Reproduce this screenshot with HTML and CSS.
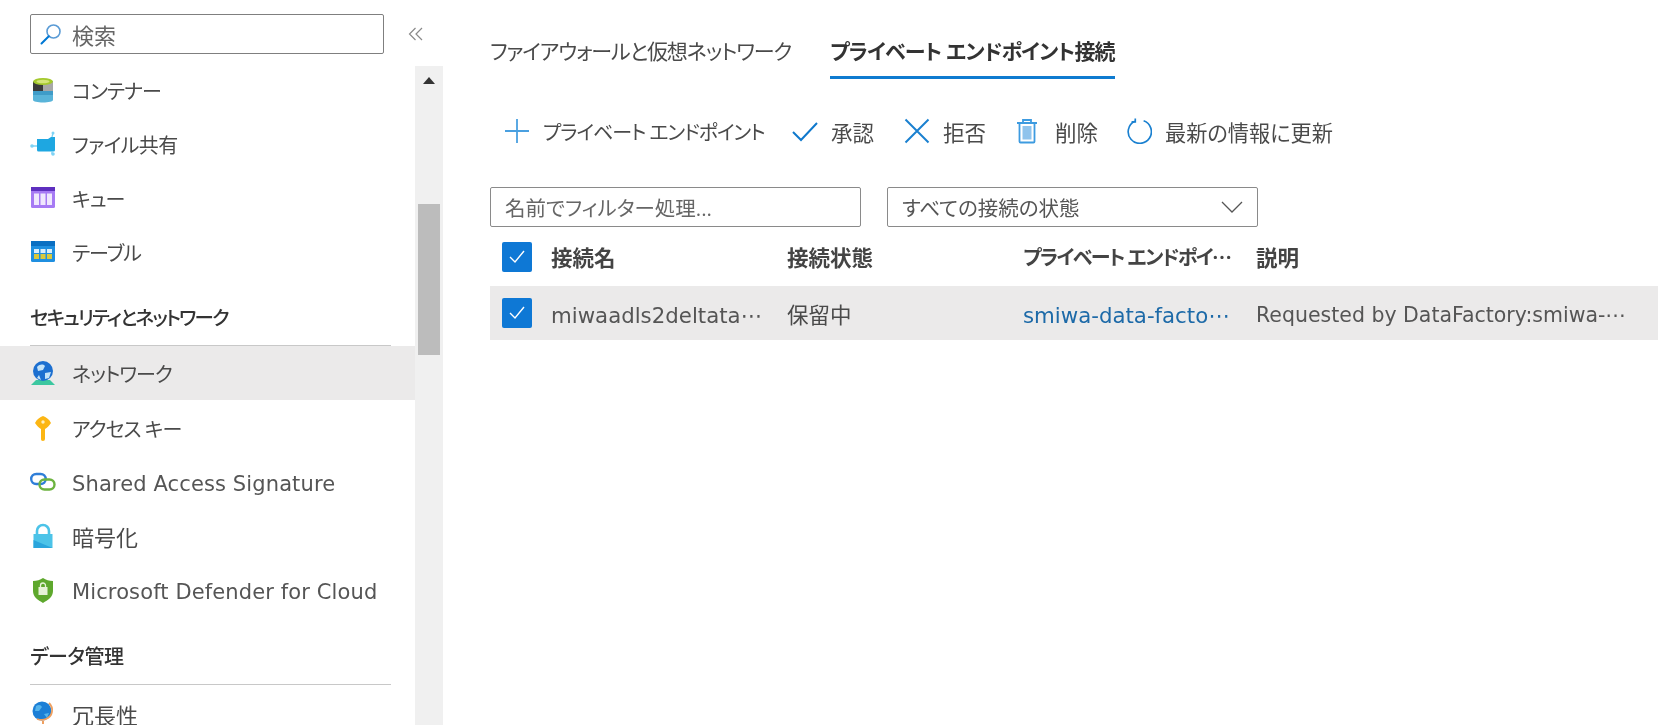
FILE: index.html
```html
<!DOCTYPE html>
<html lang="ja">
<head>
<meta charset="utf-8">
<title>ネットワーク</title>
<link rel="stylesheet" href="styles.css">
</head>
<body>
<div class="app">
  <aside class="side">
    <div class="search-row">
      <div class="search">
        <svg class="search-icon" viewBox="0 0 22 22"><circle cx="13.5" cy="8.5" r="6.5" fill="none" stroke="#5a9bd5" stroke-width="1.6"/><path d="M8.8 13.2 1.5 20.5" stroke="#0078d4" stroke-width="2" stroke-linecap="round"/></svg>
        <span>検索</span>
      </div>
      <svg class="collapse" viewBox="0 0 16 16"><path d="M7.5 2 1.5 8l6 6M14 2 8 8l6 6" fill="none" stroke="#8a8a8a" stroke-width="1.2"/></svg>
    </div>
    <div class="side-body">
      <nav class="nav">
        <a class="item"><svg class="ic" viewBox="0 0 26 26"><path d="M3 4h20v19c0 1.5-4.5 2.5-10 2.5S3 24.500 3 23z" fill="#59b4d9"/><path d="M3 5h10v9H3z" fill="#3a3a3a"/><path d="M13 5h10v9H13z" fill="#a8a8a8"/><path d="M3 14h20v4H3z" fill="#3f9cc8"/><ellipse cx="13" cy="4.500" rx="10" ry="3.500" fill="#a4c92d"/><ellipse cx="13" cy="4.500" rx="6.500" ry="1.800" fill="#d5e57a"/></svg><span>コンテナー</span></a>
        <a class="item"><svg class="ic" viewBox="0 0 26 26"><path d="M7 8h11l3-2h4v13a1.500 1.500 0 0 1-1.500 1.500h-15A1.500 1.500 0 0 1 7 19z" fill="#1ea7e1"/><path d="M1 15h6M22 6l1-4M22 20v3" stroke="#7fd3f5" stroke-width="1.300"/><circle cx="2" cy="15" r="1.800" fill="#7fd3f5"/><circle cx="23" cy="2" r="1.500" fill="#7fd3f5"/><circle cx="23" cy="23" r="1.800" fill="#7fd3f5"/></svg><span class="loose">ファイル共有</span></a>
        <a class="item"><svg class="ic" viewBox="0 0 26 26"><rect x="1" y="2" width="24" height="21" rx="1.500" fill="#a67af4"/><rect x="1" y="2" width="24" height="4" fill="#5e2fbf"/><path d="M4 8.500h5V20H4zM10.500 8.500h5V20h-5zM17 8.500h5V20h-5z" fill="#efe7fd"/></svg><span>キュー</span></a>
        <a class="item"><svg class="ic" viewBox="0 0 26 26"><rect x="1" y="2" width="24" height="21" rx="1.500" fill="#1f8fe0"/><rect x="1" y="2" width="24" height="5" fill="#0a6fc2"/><path d="M4 10h5v4H4zM10.500 10h5v4h-5zM17 10h5v4h-5z" fill="#d9eefb"/><path d="M4 15h5v5H4zM10.500 15h5v5h-5zM17 15h5v5h-5z" fill="#d8c93c"/></svg><span>テーブル</span></a>
        <div class="section">セキュリティとネットワーク</div>
        <a class="item active"><svg class="ic" viewBox="0 0 26 26"><path d="M6 20 1 25h24l-5-5z" fill="#3cc7a0"/><circle cx="13" cy="11" r="10" fill="#1c6fd0"/><path d="M7 7c3-3 6-3 8-1l-2 4-5 1zM15 13l6-1-2 6-4 1zM9 15l2 5-4-2z" fill="#c4e3f8"/></svg><span>ネットワーク</span></a>
        <a class="item"><svg class="ic" viewBox="0 0 26 26"><path d="M13 1c3 1 6 3 8 7-2 3-4 5-6 6v10a2 2 0 0 1-2 2c-1.500 0-2-1-2-2V14C9 13 7 11 5 8c2-4 5-6 8-7z" fill="#fcb614"/><circle cx="13" cy="7" r="1.700" fill="#fff0bd"/></svg><span>アクセス キー</span></a>
        <a class="item"><svg class="ic" viewBox="0 0 26 26"><rect x="1.200" y="5" width="14.500" height="10" rx="5" fill="none" stroke="#2f7ed8" stroke-width="2.400"/><rect x="9.500" y="10.500" width="15" height="10" rx="5" fill="none" stroke="#6cb33f" stroke-width="2.400"/></svg><span class="latin">Shared Access Signature</span></a>
        <a class="item"><svg class="ic" viewBox="0 0 26 26"><path d="M7 12V8a6 6 0 0 1 12 0v4" fill="none" stroke="#4cc3e8" stroke-width="2.600"/><rect x="3.500" y="11" width="19" height="14" fill="#4cc3e8"/><path d="M3.500 25v-8l19 8z" fill="#2aa5dc"/></svg><span class="kanji">暗号化</span></a>
        <a class="item"><svg class="ic" viewBox="0 0 26 26"><path d="M13 1c3 2 6 3 10 3v10c0 6-5 9-10 12C8 23 3 20 3 14V4c4 0 7-1 10-3z" fill="#5ea82d"/><rect x="8.500" y="10" width="9" height="8" fill="#e6f2d7"/><path d="M10.500 10V8.500a2.500 2.500 0 0 1 5 0V10" fill="none" stroke="#e6f2d7" stroke-width="1.300"/></svg><span class="latin">Microsoft Defender for Cloud</span></a>
        <div class="section second">データ管理</div>
        <a class="item"><svg class="ic" viewBox="0 0 26 26"><circle cx="12" cy="10" r="9.500" fill="#1c7fd6"/><path d="M6 5c3-2 5-1 6 1l-3 4-4 0zM14 13l5-1-2 5z" fill="#55b4ec"/><path d="M19 2c5 5 4 13-3 16-3 1.500-6 1-9 0" fill="none" stroke="#f0a060" stroke-width="1.800"/><path d="M13 20v3M8 25h10" stroke="#f0a060" stroke-width="2"/></svg><span class="kanji">冗長性</span></a>
      </nav>
      <div class="scrollbar">
        <svg class="arrow" viewBox="0 0 12 7"><path d="M6 0l6 7H0z" fill="#333"/></svg>
        <div class="thumb"></div>
      </div>
    </div>
  </aside>
  <main class="main">
    <div class="tabs">
      <div class="tab">ファイアウォールと仮想ネットワーク</div>
      <div class="tab selected">プライベート エンドポイント接続</div>
    </div>
    <div class="toolbar">
      <div class="tool t-add"><svg class="tool-ic" viewBox="0 0 26 26"><path d="M13 1v24M1 13h24" stroke="#4aa0e0" stroke-width="1.800"/></svg><span class="kana">プライベート エンドポイント</span></div>
      <div class="tool t-ok"><svg class="tool-ic" viewBox="0 0 26 26"><path d="M1 14l8 8L25 5" fill="none" stroke="#0f78cc" stroke-width="2"/></svg><span>承認</span></div>
      <div class="tool t-no"><svg class="tool-ic" viewBox="0 0 26 26"><path d="M1.500 1.500l23 23M24.500 1.500l-23 23" stroke="#1a80d0" stroke-width="2"/></svg><span>拒否</span></div>
      <div class="tool t-del"><svg class="tool-ic trash" viewBox="0 0 22 26"><path d="M1 5h20M7 5V2h8v3" fill="none" stroke="#3d9be0" stroke-width="1.800"/><rect x="3.500" y="5" width="15" height="19.500" rx="1" fill="none" stroke="#3d9be0" stroke-width="1.800"/><rect x="6.500" y="8" width="9" height="13.500" fill="#8fc3ec"/></svg><span>削除</span></div>
      <div class="tool t-ref"><svg class="tool-ic" viewBox="0 0 28 28"><path d="M9.500 3.500A12.500 12.500 0 1 0 19 3" fill="none" stroke="#1a80d0" stroke-width="1.800"/><path d="M10 .5V4.200H6" fill="none" stroke="#1a80d0" stroke-width="1.800"/></svg><span class="refresh">最新の情報に更新</span></div>
    </div>
    <div class="filters">
      <div class="field filter">名前でフィルター処理...</div>
      <div class="field select"><span>すべての接続の状態</span><svg class="chev" viewBox="0 0 22 12"><path d="M1 1l10 10L21 1" fill="none" stroke="#555" stroke-width="1.300"/></svg></div>
    </div>
    <div class="row head">
      <div class="cell cb"><span class="check"><svg viewBox="0 0 30 30"><path d="M8 15l5 5 9-11" fill="none" stroke="#fff" stroke-width="1.400"/></svg></span></div>
      <div class="cell name">接続名</div>
      <div class="cell state">接続状態</div>
      <div class="cell ep tight">プライベート エンドポイ⋯</div>
      <div class="cell desc">説明</div>
    </div>
    <div class="row data">
      <div class="cell cb"><span class="check"><svg viewBox="0 0 30 30"><path d="M8 15l5 5 9-11" fill="none" stroke="#fff" stroke-width="1.400"/></svg></span></div>
      <div class="cell name latin wide">miwaadls2deltata⋯</div>
      <div class="cell state">保留中</div>
      <div class="cell ep latin link wide">smiwa-data-facto⋯</div>
      <div class="cell desc latin">Requested by DataFactory:smiwa-⋯</div>
    </div>
  </main>
</div>
</body>
</html>
```
FILE: styles.css
```css
* { box-sizing: border-box; }
html, body { margin: 0; height: 100%; overflow: hidden; background: #fff; }
body {
  font-family: "Open Sans", "Noto Sans CJK JP", sans-serif;
  font-size: 20px;
  color: #4a4a4a;
  font-feature-settings: "palt";
}
.app { display: flex; height: 725px; filter: blur(0.45px); }
.side { width: 443px; flex: none; display: flex; flex-direction: column; padding-top: 14px; }
.search-row { display: flex; align-items: center; padding-left: 30px; height: 40px; margin-bottom: 12px; }
.search {
  width: 354px; height: 40px; border: 1.500px solid #7f7f7f; border-radius: 2px;
  display: flex; align-items: center; padding-left: 9px; gap: 10px; color: #666; font-size: 22px;
  font-feature-settings: normal;
}
.search-icon { width: 22px; height: 22px; }
.collapse { width: 16px; height: 16px; margin-left: 24px; }
.side-body { flex: 1; display: flex; min-height: 0; }
.nav { width: 415px; flex: none; margin-top: -3px; }
.item { display: flex; align-items: center; height: 54px; padding-left: 30px; gap: 16px; }
.item .ic { width: 26px; height: 26px; flex: none; }
.item span { letter-spacing: -1px; }
.item .loose { letter-spacing: -0.6px; }
.item .kanji { font-size: 22px; letter-spacing: 0; }
.item .latin { font-family: "DejaVu Sans", sans-serif; font-size: 21px; letter-spacing: 0.12px; color: #555; padding-top: 4px; }
.item.active { background: #ebeaea; margin-bottom: 1px; }
.section {
  margin: 12px 24px 0 30px; height: 55px; border-bottom: 1.500px solid #c8c8c8;
  display: flex; align-items: center; padding-bottom: 3px; font-weight: 500; font-size: 19.500px; color: #333;
  letter-spacing: -1.800px;
}
.section.second { margin-top: 13px; margin-bottom: 2px; letter-spacing: -0.5px; font-size: 20px; }
.scrollbar { width: 28px; background: #f0f0f0; display: flex; flex-direction: column; align-items: center; padding-top: 11px; }
.arrow { width: 12px; height: 7px; }
.thumb { width: 22px; height: 151px; background: #bcbcbc; margin-top: 120px; }
.main { flex: 1; min-width: 0; padding: 28px 5px 0 47px; }
.tabs { display: flex; gap: 39px; height: 51px; }
.tab { height: 51px; padding-top: 7px; font-size: 21px; letter-spacing: -1.1px; white-space: nowrap; }
.tab.selected { font-weight: 600; color: #333; border-bottom: 3px solid #0e7bd0; letter-spacing: -0.8px; }
.toolbar { display: flex; align-items: center; height: 30px; margin-top: 37px; margin-left: 14px; font-size: 21.500px; }
.tool { display: flex; align-items: center; gap: 13px; white-space: nowrap; }
.tool .kana { font-size: 20px; letter-spacing: -1.1px; }
.tool .refresh { font-size: 21.200px; }
.tool-ic { width: 26px; height: 26px; flex: none; }
.tool-ic.trash { width: 22px; }
.t-add { width: 288px; }
.t-ok { width: 112px; }
.t-no { width: 112px; }
.t-del { width: 110px; gap: 17px; }
.filters { display: flex; gap: 26px; margin-top: 41px; font-size: 20.500px; }
.field {
  width: 371px; height: 40px; border: 1.500px solid #8a8a8a; border-radius: 2px;
  display: flex; align-items: center; padding-left: 14px; color: #666;
}
.select { justify-content: space-between; padding-right: 14px; color: #555; }
.chev { width: 22px; height: 12px; }
.row { display: flex; align-items: center; width: 1168px; }
.head { height: 59px; font-weight: 600; font-size: 21.500px; color: #444; }
.data { height: 54px; background: #ebeaea; font-size: 21.500px; }
.cell { white-space: nowrap; overflow: hidden; flex: none; }
.cb { width: 61px; padding-left: 12px; display: flex; }
.check { width: 30px; height: 30px; background: #0e78d5; border-radius: 2px; display: block; }
.check svg { display: block; width: 30px; height: 30px; }
.name { width: 236px; }
.state { width: 236px; }
.ep { width: 233px; }
.tight { font-size: 20px; letter-spacing: -1.600px; }
.desc { flex: 1; }
.latin { font-family: "DejaVu Sans", sans-serif; font-size: 20.500px; color: #555; padding-top: 4px; }
.wide { font-size: 21.300px; }
.link { color: #1d6aa8; }
```
